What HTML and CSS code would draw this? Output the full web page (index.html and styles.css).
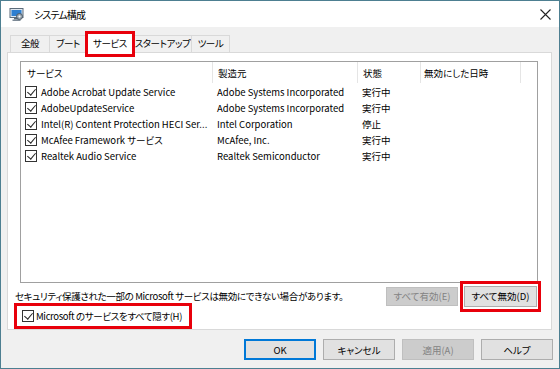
FILE: index.html
```html
<!DOCTYPE html>
<html lang="ja">
<head>
    <meta charset="UTF-8">
    <title>システム構成</title>
    <link rel="stylesheet" href="styles.css">
</head>
<body>
    <div class="window">
        <div class="titlebar">
            <svg class="app-icon" width="15" height="15" viewBox="0 0 15 15">
                <rect x="1" y="1.5" width="13" height="9" fill="#dfe8f0" stroke="#5b6b7a"/>
                <rect x="2.5" y="3" width="10" height="6" fill="#2f7fd0"/>
                <rect x="5" y="11" width="5" height="1.5" fill="#5b6b7a"/>
                <rect x="3.5" y="12.5" width="8" height="1.5" fill="#7d8a96"/>
                <circle cx="10.5" cy="9.5" r="3" fill="#9aa7b2" stroke="#4c5966"/>
                <circle cx="10.5" cy="9.5" r="1" fill="#fff"/>
            </svg>
            <span class="title">システム構成</span>
            <svg class="close" width="11" height="11" viewBox="0 0 11 11">
                <path d="M0.5 0.5 L10.5 10.5 M10.5 0.5 L0.5 10.5" stroke="#222" stroke-width="1.1"/>
            </svg>
        </div>

        <div class="content">
            <div class="tabstrip">
                <div class="tab">全般</div>
                <div class="tab">ブート</div>
                <div class="tab active">サービス</div>
                <div class="tab">スタートアップ</div>
                <div class="tab">ツール</div>
            </div>

            <div class="panel">
                <div class="list">
                    <div class="row head">
                        <div class="cell first">サービス</div>
                        <div class="cell sep">製造元</div>
                        <div class="cell sep">状態</div>
                        <div class="cell sep">無効にした日時</div>
                        <div class="cell"></div>
                    </div>
                    <div class="row">
                        <div class="cell first"><span class="check"></span>Adobe Acrobat Update Service</div>
                        <div class="cell">Adobe Systems Incorporated</div>
                        <div class="cell">実行中</div>
                        <div class="cell"></div>
                        <div class="cell"></div>
                    </div>
                    <div class="row">
                        <div class="cell first"><span class="check"></span>AdobeUpdateService</div>
                        <div class="cell">Adobe Systems Incorporated</div>
                        <div class="cell">実行中</div>
                        <div class="cell"></div>
                        <div class="cell"></div>
                    </div>
                    <div class="row">
                        <div class="cell first"><span class="check"></span>Intel(R) Content Protection HECI Ser...</div>
                        <div class="cell">Intel Corporation</div>
                        <div class="cell">停止</div>
                        <div class="cell"></div>
                        <div class="cell"></div>
                    </div>
                    <div class="row">
                        <div class="cell first"><span class="check"></span>McAfee Framework サービス</div>
                        <div class="cell">McAfee, Inc.</div>
                        <div class="cell">実行中</div>
                        <div class="cell"></div>
                        <div class="cell"></div>
                    </div>
                    <div class="row">
                        <div class="cell first"><span class="check"></span>Realtek Audio Service</div>
                        <div class="cell">Realtek Semiconductor</div>
                        <div class="cell">実行中</div>
                        <div class="cell"></div>
                        <div class="cell"></div>
                    </div>
                </div>

                <div class="notice-row">
                    <span class="notice">セキュリティ保護された一部の Microsoft サービスは無効にできない場合があります。</span>
                    <button class="btn disabled enable-all">すべて有効(E)</button>
                    <button class="btn marked disable-all">すべて無効(D)</button>
                </div>

                <div class="hide-row">
                    <span class="check"></span>
                    <span class="hide-label">Microsoft のサービスをすべて隠す(H)</span>
                </div>
            </div>

            <div class="dialog-buttons">
                <button class="btn default">OK</button>
                <button class="btn">キャンセル</button>
                <button class="btn disabled">適用(A)</button>
                <button class="btn">ヘルプ</button>
            </div>
        </div>
    </div>
</body>
</html>
```

FILE: styles.css
```css
* {
    margin: 0;
    padding: 0;
    box-sizing: border-box;
}

body {
    font-family: "Noto Sans CJK JP", sans-serif;
    font-size: 9.5px;
    font-feature-settings: "palt";
    color: #000;
    background: #fff;
    white-space: nowrap;
}

.window {
    width: 560px;
    height: 369px;
    border: 1px solid #4d7f91;
    background-color: #f0f0f0;
    display: flex;
    flex-direction: column;
}

.titlebar {
    height: 26px;
    background: #fff;
    display: flex;
    align-items: center;
    padding-left: 8px;
}

.app-icon {
    margin-right: 10px;
}

.title {
    font-size: 10px;
    letter-spacing: -0.9px;
}

.close {
    margin-left: auto;
    margin-right: 8px;
}

.content {
    padding: 0 7px 0 6px;
}

/* tabs */
.tabstrip {
    display: flex;
    padding-left: 3px;
    margin-top: 9px;
    height: 16px;
    align-items: flex-end;
}

.tab {
    height: 17px;
    line-height: 15px;
    text-align: center;
    border: 1px solid #d9d9d9;
    border-bottom: none;
    border-right: none;
    background: #f0f0f0;
    letter-spacing: -0.4px;
}

.tab:nth-child(1) { width: 39px; }
.tab:nth-child(2) { width: 37px; }
.tab:nth-child(4) { width: 57px; border-left: none; }
.tab:nth-child(5) { width: 39px; border-right: 1px solid #d9d9d9; }

.tab.active {
    position: relative;
    width: 48px;
    height: 20px;
    margin-bottom: -1px;
    background: #fff;
    border-right: 1px solid #d9d9d9;
    line-height: 19px;
    z-index: 1;
}

.tab.active::after {
    content: '';
    position: absolute;
    left: -2px;
    right: -2px;
    top: -3px;
    bottom: -4px;
    border: 3px solid #e8000b;
}

/* panel */
.panel {
    background: #fff;
    border: 1px solid #d9d9d9;
    height: 278px;
    padding: 8px 13px 0 12px;
}

.list {
    height: 222px;
    border: 1px solid #a0a0a0;
}

.row {
    display: grid;
    grid-template-columns: 191px 145px 63px 100px 1fr;
    height: 16px;
    align-items: center;
}

.row.head {
    height: 21px;
    margin-bottom: 1px;
}

.cell {
    padding-left: 5px;
    height: 100%;
    display: flex;
    align-items: center;
    overflow: hidden;
}

.cell.first {
    padding-left: 4px;
}

.head .cell.first {
    padding-left: 6px;
}

.head .cell:nth-child(4) {
    padding-left: 3px;
}

.head .cell.sep {
    border-left: 1px solid #e5e5e5;
}

.head .cell:last-child {
    border-left: 1px solid #e5e5e5;
}

.check {
    display: inline-block;
    width: 12px;
    height: 12px;
    border: 1px solid #333;
    background: #fff;
    margin-right: 4px;
    position: relative;
    flex-shrink: 0;
}

.check::after {
    content: '';
    position: absolute;
    left: 3px;
    top: 0px;
    width: 4px;
    height: 7px;
    border-right: 1.2px solid #222;
    border-bottom: 1.2px solid #222;
    transform: rotate(40deg);
}

/* notice row */
.notice-row {
    display: flex;
    align-items: center;
    height: 26px;
    margin-left: -5px;
    margin-right: -12px;
}

.notice {
    flex: 1;
    letter-spacing: -0.35px;
}

.btn {
    font-family: inherit;
    font-feature-settings: "palt";
    font-size: 9.5px;
    height: 21px;
    background: #e1e1e1;
    border: 1px solid #adadad;
    color: #000;
}

.btn.disabled {
    background: #cccccc;
    border-color: #bfbfbf;
    color: #838383;
}

.enable-all {
    width: 72px;
    height: 19px;
    margin-right: 6px;
}

.disable-all {
    width: 73px;
    margin-right: 13px;
}

.marked {
    position: relative;
}

.marked::after {
    content: '';
    position: absolute;
    left: -5px;
    right: -5px;
    top: -6px;
    bottom: -6px;
    border: 3px solid #e8000b;
}

.hide-row {
    display: flex;
    align-items: center;
    width: 178px;
    height: 26px;
    margin-left: -6px;
    margin-top: -6px;
    padding-left: 5px;
    border: 3px solid #e8000b;
}

.hide-row .check {
    margin-right: 2px;
}

.hide-label {
    letter-spacing: -0.35px;
}

/* dialog buttons */
.dialog-buttons {
    display: flex;
    justify-content: flex-end;
    gap: 7px;
    margin-top: 9px;
    margin-right: -1px;
}

.dialog-buttons .btn {
    width: 72px;
    height: 21px;
}

.btn.default {
    border: 2px solid #0078d7;
}
```
